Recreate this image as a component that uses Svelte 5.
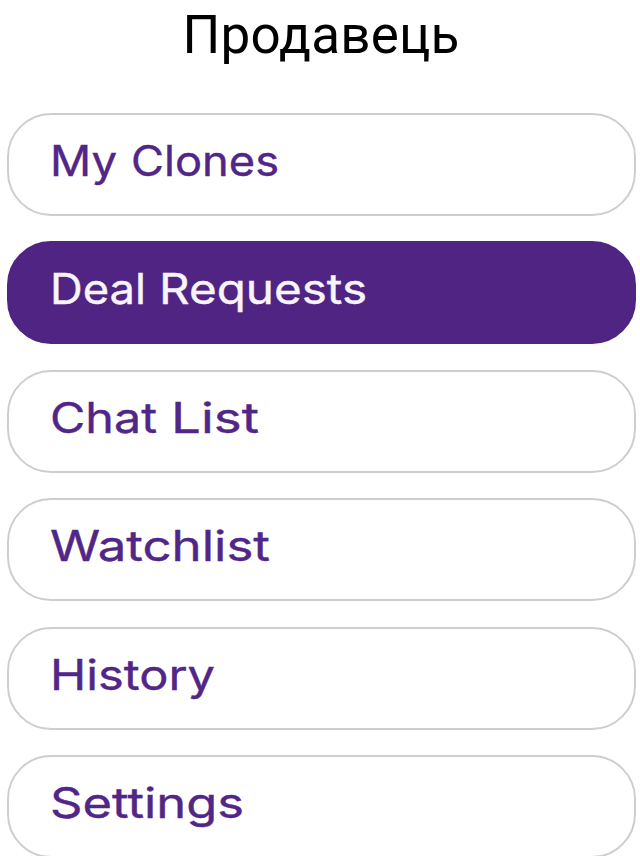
<script lang="ts">
  const items = [
    { label: 'My Clones', words: [['My', 0, 67], ['Clones', 81, 148]] },
    { label: 'Deal Requests', words: [['Deal', 0, 96], ['Requests', 109, 208]] },
    { label: 'Chat List', words: [['Chat', 0, 107], ['List', 121, 88]] },
    { label: 'Watchlist', words: [['Watchlist', 0, 220]] },
    { label: 'History', words: [['History', 0, 165]] },
    { label: 'Settings', words: [['Settings', 0, 194]] },
  ];

  let selected = $state('Deal Requests');
</script>

<main class="page">
  <h1>Продавець</h1>
  <nav class="menu">
    {#each items as item}
      <button
        class="menu-item"
        class:active={selected === item.label}
        aria-label={item.label}
        onclick={() => (selected = item.label)}
      >
        <svg class="label" width="400" height="60" viewBox="0 0 400 60">
          {#each item.words as [word, x, width]}
            <text {x} y="39" textLength={width} lengthAdjust="spacingAndGlyphs">{word}</text>
          {/each}
        </svg>
      </button>
    {/each}
  </nav>
</main>

<style>
  :global(body) {
    background: #fff;
    overflow: hidden;
  }
  .page {
    height: 856px;
    overflow: hidden;
  }
  h1 {
    margin: 0;
    height: 113px;
    padding: 3px 0 0 2px;
    box-sizing: border-box;
    font: 400 53px/64px Roboto, sans-serif;
    letter-spacing: 0.2px;
    text-align: center;
    color: #000;
  }
  .menu {
    display: flex;
    flex-direction: column;
    gap: 25.4px;
    padding: 0 4px 0 7px;
  }
  .menu-item {
    display: flex;
    flex-shrink: 0;
    align-items: flex-start;
    height: 103px;
    padding: 22px 41px 0;
    box-sizing: border-box;
    background: #fff;
    border: 2px solid #cecece;
    border-radius: 44px;
    color: #522687;
  }
  .menu-item.active {
    background: #4f2482;
    border-color: #4f2482;
    color: #f8f4fb;
  }
  .label {
    overflow: visible;
    font: 400 42px Inter, sans-serif;
    fill: currentColor;
    stroke: currentColor;
    stroke-width: 0.4px;
  }
</style>
